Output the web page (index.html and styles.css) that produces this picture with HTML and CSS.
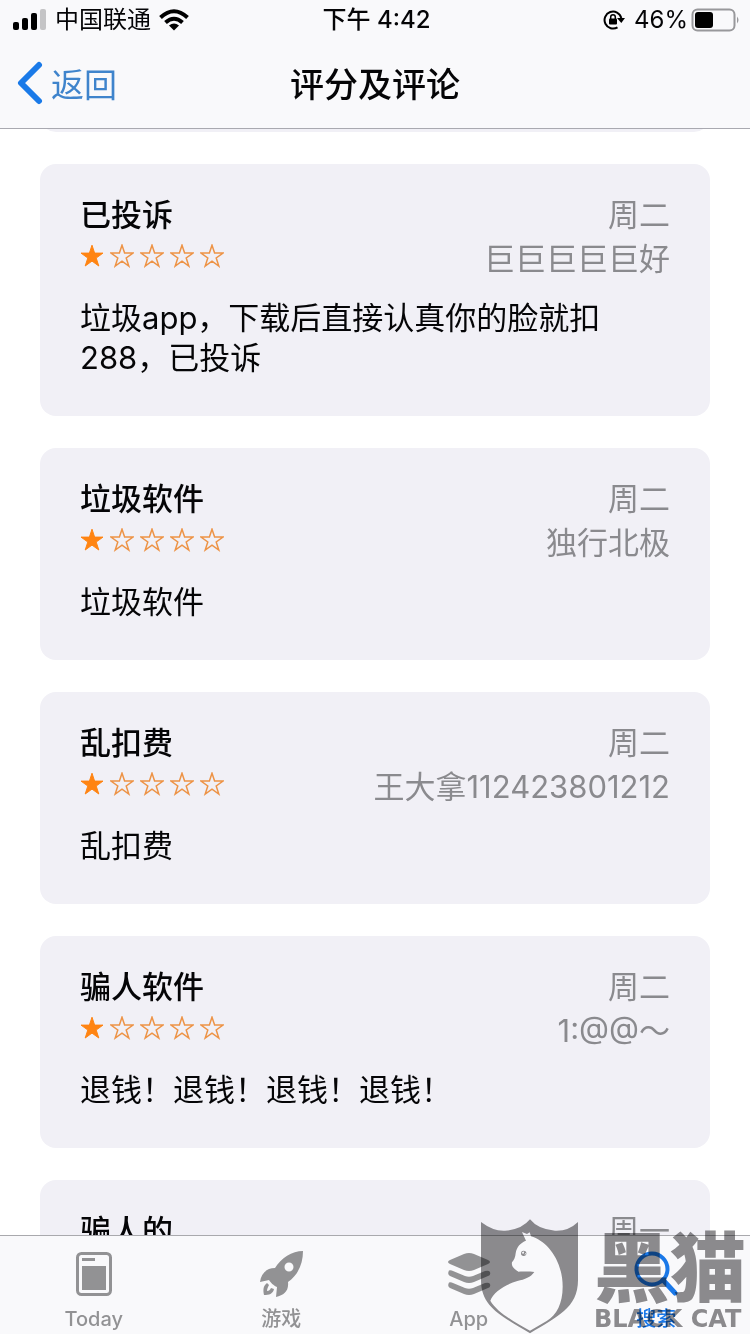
FILE: index.html
```html
<!DOCTYPE html>
<html lang="zh-CN">
<head>
<meta charset="utf-8">
<meta name="viewport" content="width=device-width, initial-scale=1">
<title>评分及评论</title>
<link rel="stylesheet" href="styles.css">
</head>
<body>
<svg class="defs" aria-hidden="true">
  <symbol id="star" viewBox="0 0 24 24"><path d="M12 1.2 14.6 9.1H23L16.2 14 18.8 22 12 17.1 5.2 22 7.8 14 1 9.1H9.4Z"/></symbol>
  <symbol id="rating" viewBox="0 0 144 24">
    <use href="#star" class="star-full" width="24" height="24"/>
    <use href="#star" class="star-empty" x="30" width="24" height="24"/>
    <use href="#star" class="star-empty" x="60" width="24" height="24"/>
    <use href="#star" class="star-empty" x="90" width="24" height="24"/>
    <use href="#star" class="star-empty" x="120" width="24" height="24"/>
  </symbol>
</svg>
<header class="top">
  <div class="status">
    <div class="status-side">
      <svg class="signal" viewBox="0 0 34 20" aria-hidden="true"><rect x="0" y="12" width="6" height="8" rx="2"/><rect x="9" y="8" width="6" height="12" rx="2"/><rect x="18" y="3" width="6" height="17" rx="2"/><rect x="27" y="-1" width="6" height="21" rx="2" fill="#c4c4c6"/></svg>
      <span>中国联通</span>
      <svg class="wifi" viewBox="0 0 30 22" aria-hidden="true"><path d="M1.5 8.5Q15-4 28.5 8.5M6.5 13.5Q15 6 23.5 13.5" fill="none" stroke="#000" stroke-width="4"/><path d="M10 16.5Q15 12.5 20 16.5L15 21.5Z"/></svg>
    </div>
    <div class="clock">下午 4:42</div>
    <div class="status-side status-right">
      <svg class="lock" viewBox="0 0 22 22" aria-hidden="true"><path d="M14.500 18.300A8.500 8.500 0 1 1 18.300 9" fill="none" stroke="#000" stroke-width="2"/><path d="M14 9H22L18.300 14Z"/><rect x="6" y="9.500" width="8" height="6" rx="1"/><path d="M7.700 10V8a2.300 2.300 0 0 1 4.600 0v2" fill="none" stroke="#000" stroke-width="1.500"/></svg>
      <span>46%</span>
      <svg class="battery" viewBox="0 0 49 24" aria-hidden="true"><rect x="1.500" y="1.500" width="42" height="21" rx="5" fill="none" stroke="#98989b" stroke-width="2"/><rect x="4" y="4" width="18" height="16" rx="3"/><path d="M46 8.500Q49 12 46 15.500Z" fill="#98989b"/></svg>
    </div>
  </div>
  <nav class="nav">
    <button class="back" type="button"><svg viewBox="0 0 26 44" aria-hidden="true"><path d="M22 4 4 22 22 40" fill="none" stroke="#1a7ae8" stroke-width="6" stroke-linecap="round" stroke-linejoin="round"/></svg>返回</button>
    <h1>评分及评论</h1>
  </nav>
</header>
<main class="reviews">
  <div class="card card-passed"></div>
  <article class="card">
    <div class="row"><h2>已投诉</h2><time>周二</time></div>
    <div class="row"><svg class="stars" role="img" aria-label="1 星"><use href="#rating"/></svg><span>巨巨巨巨巨好</span></div>
    <p>垃圾app，下载后直接认真你的脸就扣288，已投诉</p>
  </article>
  <article class="card">
    <div class="row"><h2>垃圾软件</h2><time>周二</time></div>
    <div class="row"><svg class="stars" role="img" aria-label="1 星"><use href="#rating"/></svg><span>独行北极</span></div>
    <p>垃圾软件</p>
  </article>
  <article class="card">
    <div class="row"><h2>乱扣费</h2><time>周二</time></div>
    <div class="row"><svg class="stars" role="img" aria-label="1 星"><use href="#rating"/></svg><span>王大拿112423801212</span></div>
    <p>乱扣费</p>
  </article>
  <article class="card">
    <div class="row"><h2>骗人软件</h2><time>周二</time></div>
    <div class="row"><svg class="stars" role="img" aria-label="1 星"><use href="#rating"/></svg><span>1:@@～</span></div>
    <p>退钱！退钱！退钱！退钱！</p>
  </article>
  <article class="card">
    <div class="row"><h2>骗人的</h2><time>周一</time></div>
  </article>
</main>
<nav class="tabs">
  <button class="tab" type="button">
    <svg viewBox="0 0 48 48" aria-hidden="true"><rect x="7.500" y="3.500" width="33" height="41" rx="4" fill="none" stroke="currentColor" stroke-width="3"/><path d="M12 8H25V11H12ZM12 16H36V40H12Z"/></svg>
    <span>Today</span>
  </button>
  <button class="tab" type="button">
    <svg viewBox="0 0 48 48" aria-hidden="true"><path fill-rule="evenodd" d="M46 1C35 1 24 8 18 18C9 18 4 24 3 32L12 30C13 32 17 36 20 37L19 47C27 45 32 41 31 32C41 25 46 14 46 1ZM32 12.500a4.500 4.500 0 1 1 0 9a4.500 4.500 0 0 1 0-9Z"/><path d="M10 33C6 36 6 40 7 45C12 45 16 44 17 39L14 38C13 40 12 41 10 41C10 39 11 37 12 35Z"/></svg>
    <span>游戏</span>
  </button>
  <button class="tab" type="button">
    <svg viewBox="0 0 48 48" aria-hidden="true"><path d="M19 4Q24 2 29 4L43 10Q47 12 43 14L29 20Q24 22 19 20L5 14Q1 12 5 10Z"/><path d="M4 20.500Q6 20 8 21L20 26Q24 27.500 28 26L40 21Q44 20 45 22Q46 25 43 26L29 32Q24 34 19 32L5 26Q2 24 4 20.500ZM4 32.500Q6 32 8 33L20 38Q24 39.500 28 38L40 33Q44 32 45 34Q46 37 43 38L29 44Q24 46 19 44L5 38Q2 36 4 32.500Z"/></svg>
    <span>App</span>
  </button>
  <button class="tab tab-active" type="button" aria-current="page">
    <svg viewBox="0 0 48 48" aria-hidden="true"><circle cx="20" cy="19" r="15.500" fill="none" stroke="currentColor" stroke-width="4"/><path d="M31 30 43 43" stroke="currentColor" stroke-width="5" stroke-linecap="round"/></svg>
    <span>搜索</span>
  </button>
</nav>
<div class="brand">
  <svg viewBox="150 54 300 348" aria-hidden="true"><path fill-rule="evenodd" d="M153 66Q190 94 225 92Q275 89 300 58Q325 89 375 92Q415 94 444 66V240C444 325 380 350 300 400C220 350 153 325 153 240ZM276 96L291 102L299 97L303 109C350 122 398 180 398 260C398 310 380 345 350 363L300 392C250 365 200 335 181 302C190 275 230 252 262 243C285 238 302 232 313 216C295 214 285 215 265 215C255 208 243 200 246 187C252 180 256 172 257 160C260 140 272 128 288 122Z"/><circle cx="281" cy="160" r="8"/><path d="M275 159Q278 153 283 155L280 162ZM283 165L287 158L288 162Z" fill="#fff"/></svg>
  <div class="brand-name"><span class="brand-cn">黑猫</span><span class="brand-en">BLACK CAT</span></div>
</div>
</body>
</html>
```
FILE: styles.css
```css
* { box-sizing: border-box; }

body {
  position: relative;
  display: flex;
  flex-direction: column;
  height: 100vh;
  margin: 0;
  overflow: hidden;
  background: #fff;
  color: #050507;
  font-family: Inter, "Noto Sans CJK SC", sans-serif;
  font-size: 31px;
}

h1, h2, p { margin: 0; }

button {
  padding: 0;
  border: 0;
  background: none;
  font: inherit;
}

.defs { position: absolute; width: 0; height: 0; }

.top {
  flex: none;
  background: #f9f9fb;
  border-bottom: 1px solid #a9a9b0;
}

.status {
  display: grid;
  grid-template-columns: 1fr auto 1fr;
  align-items: center;
  height: 40px;
  padding: 0 10px 0 13px;
  font-size: 24px;
  line-height: 40px;
}

.status-side { display: flex; align-items: center; gap: 8px; }
.status-right { justify-content: flex-end; gap: 3px; }
.clock { font-weight: 500; }
.signal { width: 34px; height: 20px; overflow: visible; }
.wifi { width: 30px; height: 22px; }
.lock { width: 22px; height: 22px; margin-right: 6px; }
.battery { width: 49px; height: 24px; }

.nav {
  display: grid;
  grid-template-columns: 1fr auto 1fr;
  align-items: center;
  height: 88px;
  padding: 0 17px 3px;
}

.nav h1 { font-size: 34px; font-weight: 500; }

.back {
  display: flex;
  align-items: center;
  gap: 8px;
  color: #3f84cc;
  font-size: 33px;
}

.back svg { width: 26px; height: 44px; }

.reviews {
  display: flex;
  flex: 1;
  flex-direction: column;
  gap: 32px;
  min-height: 0;
  padding: 0 40px;
  overflow: hidden;
}

.card {
  flex: none;
  padding: 26px 40px 38px;
  border-radius: 16px;
  background: #f1f0f6;
}

/* tail of the review scrolled under the header */
.card-passed { height: 66px; margin-top: -63px; }

.row {
  display: flex;
  align-items: center;
  justify-content: space-between;
  height: 44px;
  color: #8a8a8e;
}

.row h2 { color: #050507; font-size: 31px; font-weight: 500; }

.stars { width: 144px; height: 24px; }
.star-full { fill: #ff8412; stroke: #ff8412; }
.star-empty { fill: none; stroke: #ed9346; stroke-width: 1.5px; }

.card p { margin-top: 20px; line-height: 40px; }

.tabs {
  display: flex;
  flex: none;
  height: 99px;
  border-top: 1px solid #a9a9ad;
  background: #f9f9fb;
}

.tab {
  display: flex;
  flex: 1;
  flex-direction: column;
  align-items: center;
  gap: 9px;
  padding-top: 14px;
  color: #929294;
  font-size: 20px;
  line-height: 24px;
}

.tab svg { width: 48px; height: 48px; fill: currentColor; }
.tab span { font-weight: 500; }
.tab-active { color: #1a78e8; }

.brand {
  position: absolute;
  right: 0;
  bottom: 0;
  display: flex;
  gap: 14px;
  padding-right: 2px;
  color: #8e8d8f;
  mix-blend-mode: multiply;
  pointer-events: none;
}

.brand svg { width: 100px; height: 116px; fill: currentColor; }

.brand-name {
  display: flex;
  flex-direction: column;
  justify-content: flex-end;
  width: 154px;
}

.brand-cn {
  font-family: "Noto Sans CJK SC", sans-serif;
  font-size: 76px;
  font-weight: 900;
  line-height: 82px;
}

.brand-en {
  font-family: "DejaVu Sans", sans-serif;
  font-size: 24px;
  font-weight: 700;
  line-height: 30px;
  white-space: nowrap;
}
```
